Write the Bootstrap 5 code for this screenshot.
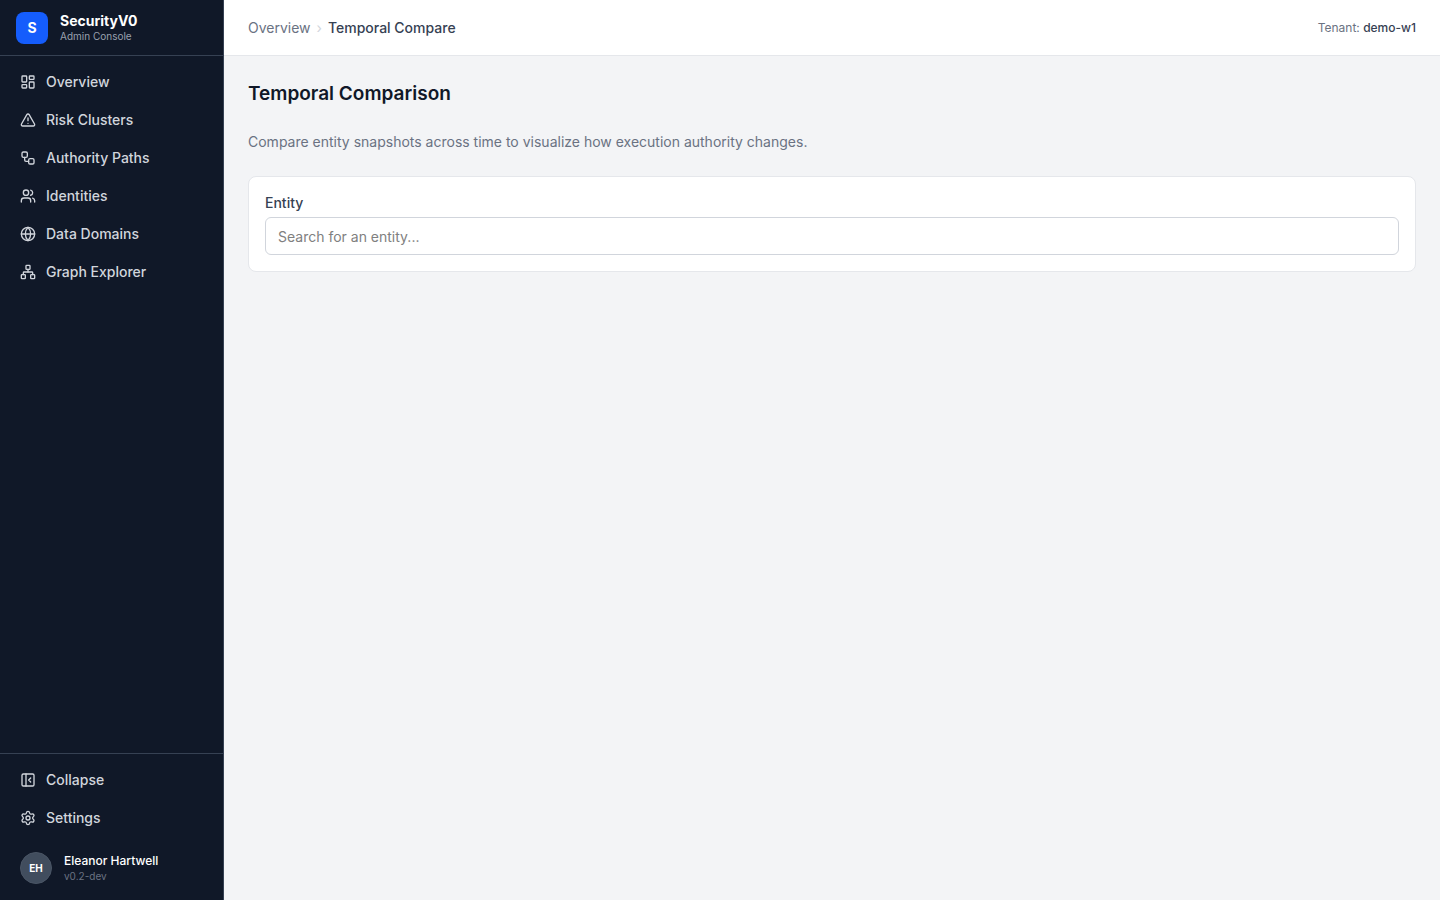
<!DOCTYPE html>
<html lang="en">
<head>
<meta charset="utf-8">
<meta name="viewport" content="width=device-width, initial-scale=1">
<title>Temporal Compare – SecurityV0</title>
<link href="https://cdn.jsdelivr.net/npm/bootstrap@5.3.0/dist/css/bootstrap.min.css" rel="stylesheet">
<style>
  body { font-family: Inter, sans-serif; font-size: 14px; line-height: 20px; background: #f3f4f6; color: #101828; }
  .sidebar { width: 224px; background: #101828; border-right: 1px solid #364153; }
  .brand-bar, .topbar { height: 56px; }
  .brand-bar { gap: 12px; border-bottom: 1px solid #364153; }
  .topbar { border-bottom: 1px solid #e5e7eb; }
  .logo { width: 32px; height: 32px; border-radius: 8px; background: #155dfc; }
  .tiny { font-size: 10px; line-height: 15px; }
  .brand-name { line-height: 16px; }
  .brand-text { padding-top: 2px; }
  .muted-dark { color: #99a1af; }
  .dim { color: #6a7282; }
  .side-list { display: flex; flex-direction: column; gap: 2px; }
  .side-item { display: flex; align-items: center; gap: 10px; width: 100%; padding: 8px 12px; border: 0; border-radius: 6px; background: transparent; color: #d1d5dc; font-weight: 500; text-decoration: none; text-align: left; }
  .side-item:hover { background: #1e2939; color: #fff; }
  .side-item svg { width: 16px; height: 16px; fill: none; stroke: currentColor; stroke-width: 2; stroke-linecap: round; stroke-linejoin: round; flex: none; }
  .side-foot { border-top: 1px solid #364153; }
  .avatar { width: 32px; height: 32px; background: #414d5e; border: 1px solid #4a5565; font-size: 10px; }
  .user-row { padding: 14px 12px 8px; gap: 12px; }
  .text-12 { font-size: 12px; line-height: 16px; }
  .crumbs { gap: 6px; }
  .crumb-now { color: #364153; }
  .crumb-sep { color: #d1d5dc; }
  .page-title { font-size: 19px; line-height: 28px; }
  .panel { border: 1px solid #e5e7eb; border-radius: 8px; }
  .entity-input { height: 38px; padding: 8px 12px; border: 1px solid #d1d5dc; border-radius: 6px; font-size: 14px; line-height: 20px; }
  .entity-input::placeholder { color: #808080; }
</style>
</head>
<body>
<div class="d-flex min-vh-100">
  <aside class="sidebar d-flex flex-column flex-shrink-0">
    <div class="brand-bar d-flex align-items-center px-3">
      <div class="logo d-flex align-items-center justify-content-center text-white fw-bold">S</div>
      <div class="brand-text d-flex flex-column">
        <span class="brand-name text-white fw-bold">SecurityV0</span>
        <span class="tiny muted-dark">Admin Console</span>
      </div>
    </div>
    <nav class="side-list p-2 flex-grow-1" aria-label="Main">
      <a class="side-item" href="#"><svg viewBox="0 0 24 24" aria-hidden="true"><rect width="7" height="9" x="3" y="3" rx="1"/><rect width="7" height="5" x="14" y="3" rx="1"/><rect width="7" height="9" x="14" y="12" rx="1"/><rect width="7" height="5" x="3" y="16" rx="1"/></svg>Overview</a>
      <a class="side-item" href="#"><svg viewBox="0 0 24 24" aria-hidden="true"><path d="m21.73 18-8-14a2 2 0 0 0-3.48 0l-8 14A2 2 0 0 0 4 21h16a2 2 0 0 0 1.73-3"/><path d="M12 9v4"/><path d="M12 17h.01"/></svg>Risk Clusters</a>
      <a class="side-item" href="#"><svg viewBox="0 0 24 24" aria-hidden="true"><rect width="8" height="8" x="3" y="3" rx="2"/><path d="M7 11v4a2 2 0 0 0 2 2h4"/><rect width="8" height="8" x="13" y="13" rx="2"/></svg>Authority Paths</a>
      <a class="side-item" href="#"><svg viewBox="0 0 24 24" aria-hidden="true"><path d="M16 21v-2a4 4 0 0 0-4-4H6a4 4 0 0 0-4 4v2"/><circle cx="9" cy="7" r="4"/><path d="M22 21v-2a4 4 0 0 0-3-3.87"/><path d="M16 3.13a4 4 0 0 1 0 7.75"/></svg>Identities</a>
      <a class="side-item" href="#"><svg viewBox="0 0 24 24" aria-hidden="true"><circle cx="12" cy="12" r="10"/><path d="M12 2a14.5 14.5 0 0 0 0 20 14.5 14.5 0 0 0 0-20"/><path d="M2 12h20"/></svg>Data Domains</a>
      <a class="side-item" href="#"><svg viewBox="0 0 24 24" aria-hidden="true"><rect x="16" y="16" width="6" height="6" rx="1"/><rect x="2" y="16" width="6" height="6" rx="1"/><rect x="9" y="2" width="6" height="6" rx="1"/><path d="M5 16v-3a1 1 0 0 1 1-1h12a1 1 0 0 1 1 1v3"/><path d="M12 12V8"/></svg>Graph Explorer</a>
    </nav>
    <div class="side-foot side-list p-2">
      <button class="side-item" type="button"><svg viewBox="0 0 24 24" aria-hidden="true"><rect width="18" height="18" x="3" y="3" rx="2"/><path d="M9 3v18"/><path d="m16 15-3-3 3-3"/></svg>Collapse</button>
      <a class="side-item" href="#"><svg viewBox="0 0 24 24" aria-hidden="true"><path d="M9.671 4.136a2.34 2.34 0 0 1 4.659 0 2.34 2.34 0 0 0 3.319 1.915 2.34 2.34 0 0 1 2.33 4.033 2.34 2.34 0 0 0 0 3.831 2.34 2.34 0 0 1-2.33 4.033 2.34 2.34 0 0 0-3.319 1.915 2.34 2.34 0 0 1-4.659 0 2.34 2.34 0 0 0-3.32-1.915 2.34 2.34 0 0 1-2.33-4.033 2.34 2.34 0 0 0 0-3.831A2.34 2.34 0 0 1 6.35 6.051a2.34 2.34 0 0 0 3.319-1.915"/><circle cx="12" cy="12" r="3"/></svg>Settings</a>
      <div class="user-row d-flex align-items-center">
        <div class="avatar d-flex align-items-center justify-content-center rounded-circle text-white fw-bold">EH</div>
        <div class="d-flex flex-column">
          <span class="text-12 text-white fw-medium">Eleanor Hartwell</span>
          <span class="tiny dim">v0.2-dev</span>
        </div>
      </div>
    </div>
  </aside>
  <div class="flex-grow-1 d-flex flex-column">
    <header class="topbar bg-white d-flex align-items-center justify-content-between px-4">
      <nav class="crumbs d-flex align-items-center" aria-label="Breadcrumb">
        <a class="dim text-decoration-none" href="#">Overview</a>
        <span class="crumb-sep" aria-hidden="true">›</span>
        <span class="crumb-now fw-medium">Temporal Compare</span>
      </nav>
      <div class="text-12 dim">Tenant: <span class="crumb-now fw-medium">demo-w1</span></div>
    </header>
    <main class="p-4 d-flex flex-column gap-4">
      <h1 class="page-title fw-semibold mb-0">Temporal Comparison</h1>
      <p class="dim mb-0">Compare entity snapshots across time to visualize how execution authority changes.</p>
      <section class="panel bg-white p-3">
        <label class="crumb-now fw-medium mb-1 d-block" for="entity">Entity</label>
        <input class="entity-input form-control" id="entity" type="text" placeholder="Search for an entity...">
      </section>
    </main>
  </div>
</div>
<script src="https://cdn.jsdelivr.net/npm/bootstrap@5.3.0/dist/js/bootstrap.bundle.min.js"></script>
</body>
</html>
